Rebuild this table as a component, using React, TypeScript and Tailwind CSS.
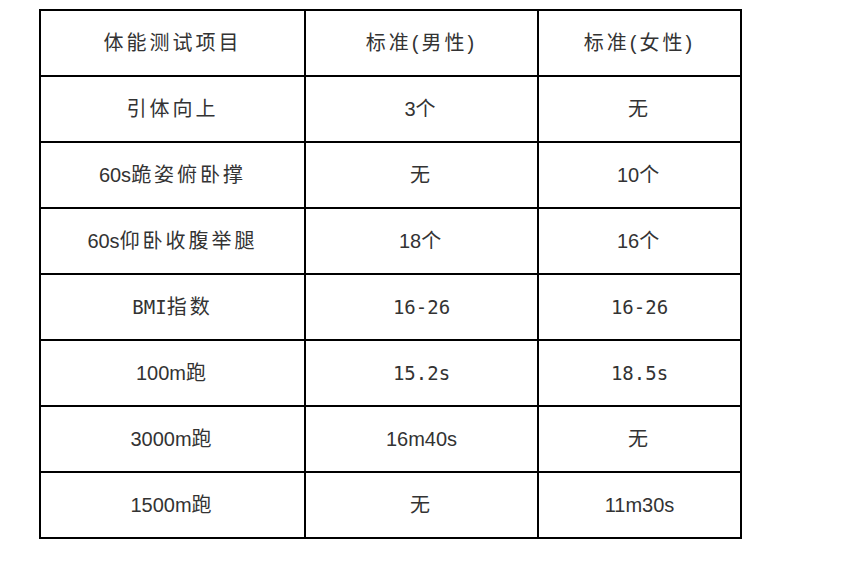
const rows: [string, string, string][] = [
  ['引体向上', '3个', '无'],
  ['60s跪姿俯卧撑', '无', '10个'],
  ['60s仰卧收腹举腿', '18个', '16个'],
  ['BMI指数', '16-26', '16-26'],
  ['100m跑', '15.2s', '18.5s'],
  ['3000m跑', '16m40s', '无'],
  ['1500m跑', '无', '11m30s'],
];

// these latin runs come out half-width (monospaced) in the source document
const MONO = ['BMI', '16-26', '15.2s', '18.5s'];

// split text so CJK runs get a bit of spacing, like the source document
function Cell({ text }: { text: string }) {
  const parts = text.match(/[\u3000-\u9fff\uff00-\uffef()]+|[^\u3000-\u9fff\uff00-\uffef()]+/g) ?? [];
  return (
    <>
      {parts.map((p, i) => {
        if (/[\u3000-\u9fff()]/.test(p)) {
          return <span key={i} className="tracking-[3px]">{p}</span>;
        }
        if (MONO.includes(p)) {
          return (
            <span key={i} className="text-[19px]" style={{ fontFamily: '"DejaVu Sans Mono", "Liberation Mono", monospace' }}>
              {p}
            </span>
          );
        }
        return <span key={i}>{p}</span>;
      })}
    </>
  );
}

export default function App() {
  return (
    <div
      className="w-[858px] h-[563px] bg-white pt-[9px] pl-[39px] text-[#333] text-[20px]"
      style={{ fontFamily: '"Liberation Sans", "Noto Sans CJK SC", sans-serif' }}
    >
      <table className="border-collapse">
        <colgroup>
          <col className="w-[265px]" />
          <col className="w-[233px]" />
          <col className="w-[203px]" />
        </colgroup>
        <thead>
          <tr className="h-[66px]">
            <th className="border-2 border-black font-normal text-center"><Cell text="体能测试项目" /></th>
            <th className="border-2 border-black font-normal text-center"><Cell text="标准(男性)" /></th>
            <th className="border-2 border-black font-normal text-center"><Cell text="标准(女性)" /></th>
          </tr>
        </thead>
        <tbody>
          {rows.map((r, i) => (
            <tr key={i} className="h-[66px]">
              {r.map((c, j) => (
                <td key={j} className="border-2 border-black text-center">
                  <Cell text={c} />
                </td>
              ))}
            </tr>
          ))}
        </tbody>
      </table>
    </div>
  );
}
